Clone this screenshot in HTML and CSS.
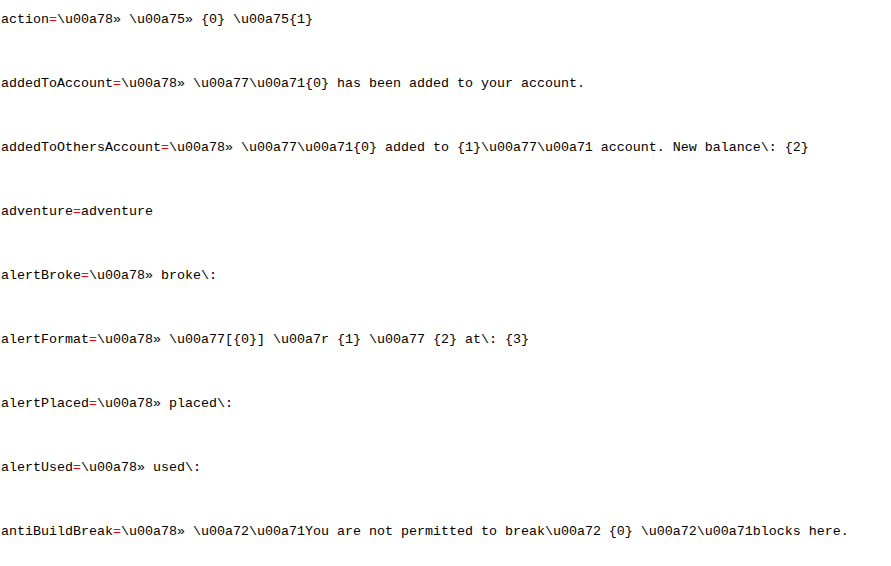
FILE: index.html
```html
<!DOCTYPE html>
<html>
<head>
<meta charset="utf-8">
<link rel="stylesheet" href="styles.css">
</head>
<body>
<div class="file">
<div class="line">action<span class="eq">=</span>\u00a78» \u00a75» {0} \u00a75{1}</div>
<div class="line">addedToAccount<span class="eq">=</span>\u00a78» \u00a77\u00a71{0} has been added to your account.</div>
<div class="line">addedToOthersAccount<span class="eq">=</span>\u00a78» \u00a77\u00a71{0} added to {1}\u00a77\u00a71 account. New balance\: {2}</div>
<div class="line">adventure<span class="eq">=</span>adventure</div>
<div class="line">alertBroke<span class="eq">=</span>\u00a78» broke\:</div>
<div class="line">alertFormat<span class="eq">=</span>\u00a78» \u00a77[{0}] \u00a7r {1} \u00a77 {2} at\: {3}</div>
<div class="line">alertPlaced<span class="eq">=</span>\u00a78» placed\:</div>
<div class="line">alertUsed<span class="eq">=</span>\u00a78» used\:</div>
<div class="line">antiBuildBreak<span class="eq">=</span>\u00a78» \u00a72\u00a71You are not permitted to break\u00a72 {0} \u00a72\u00a71blocks here.</div>
</div>
</body>
</html>
```
FILE: styles.css
```css
html, body {
  margin: 0;
  padding: 0;
  background: #ffffff;
}
.file {
  display: flex;
  flex-direction: column;
  padding: 12px 0 0 1px;
  font-family: "Liberation Mono", "Courier New", monospace;
  font-size: 13.333px;
  color: #000000;
}
.line {
  height: 64px;
  line-height: 16px;
  white-space: pre;
}
.eq {
  color: #ff0000;
}
```
